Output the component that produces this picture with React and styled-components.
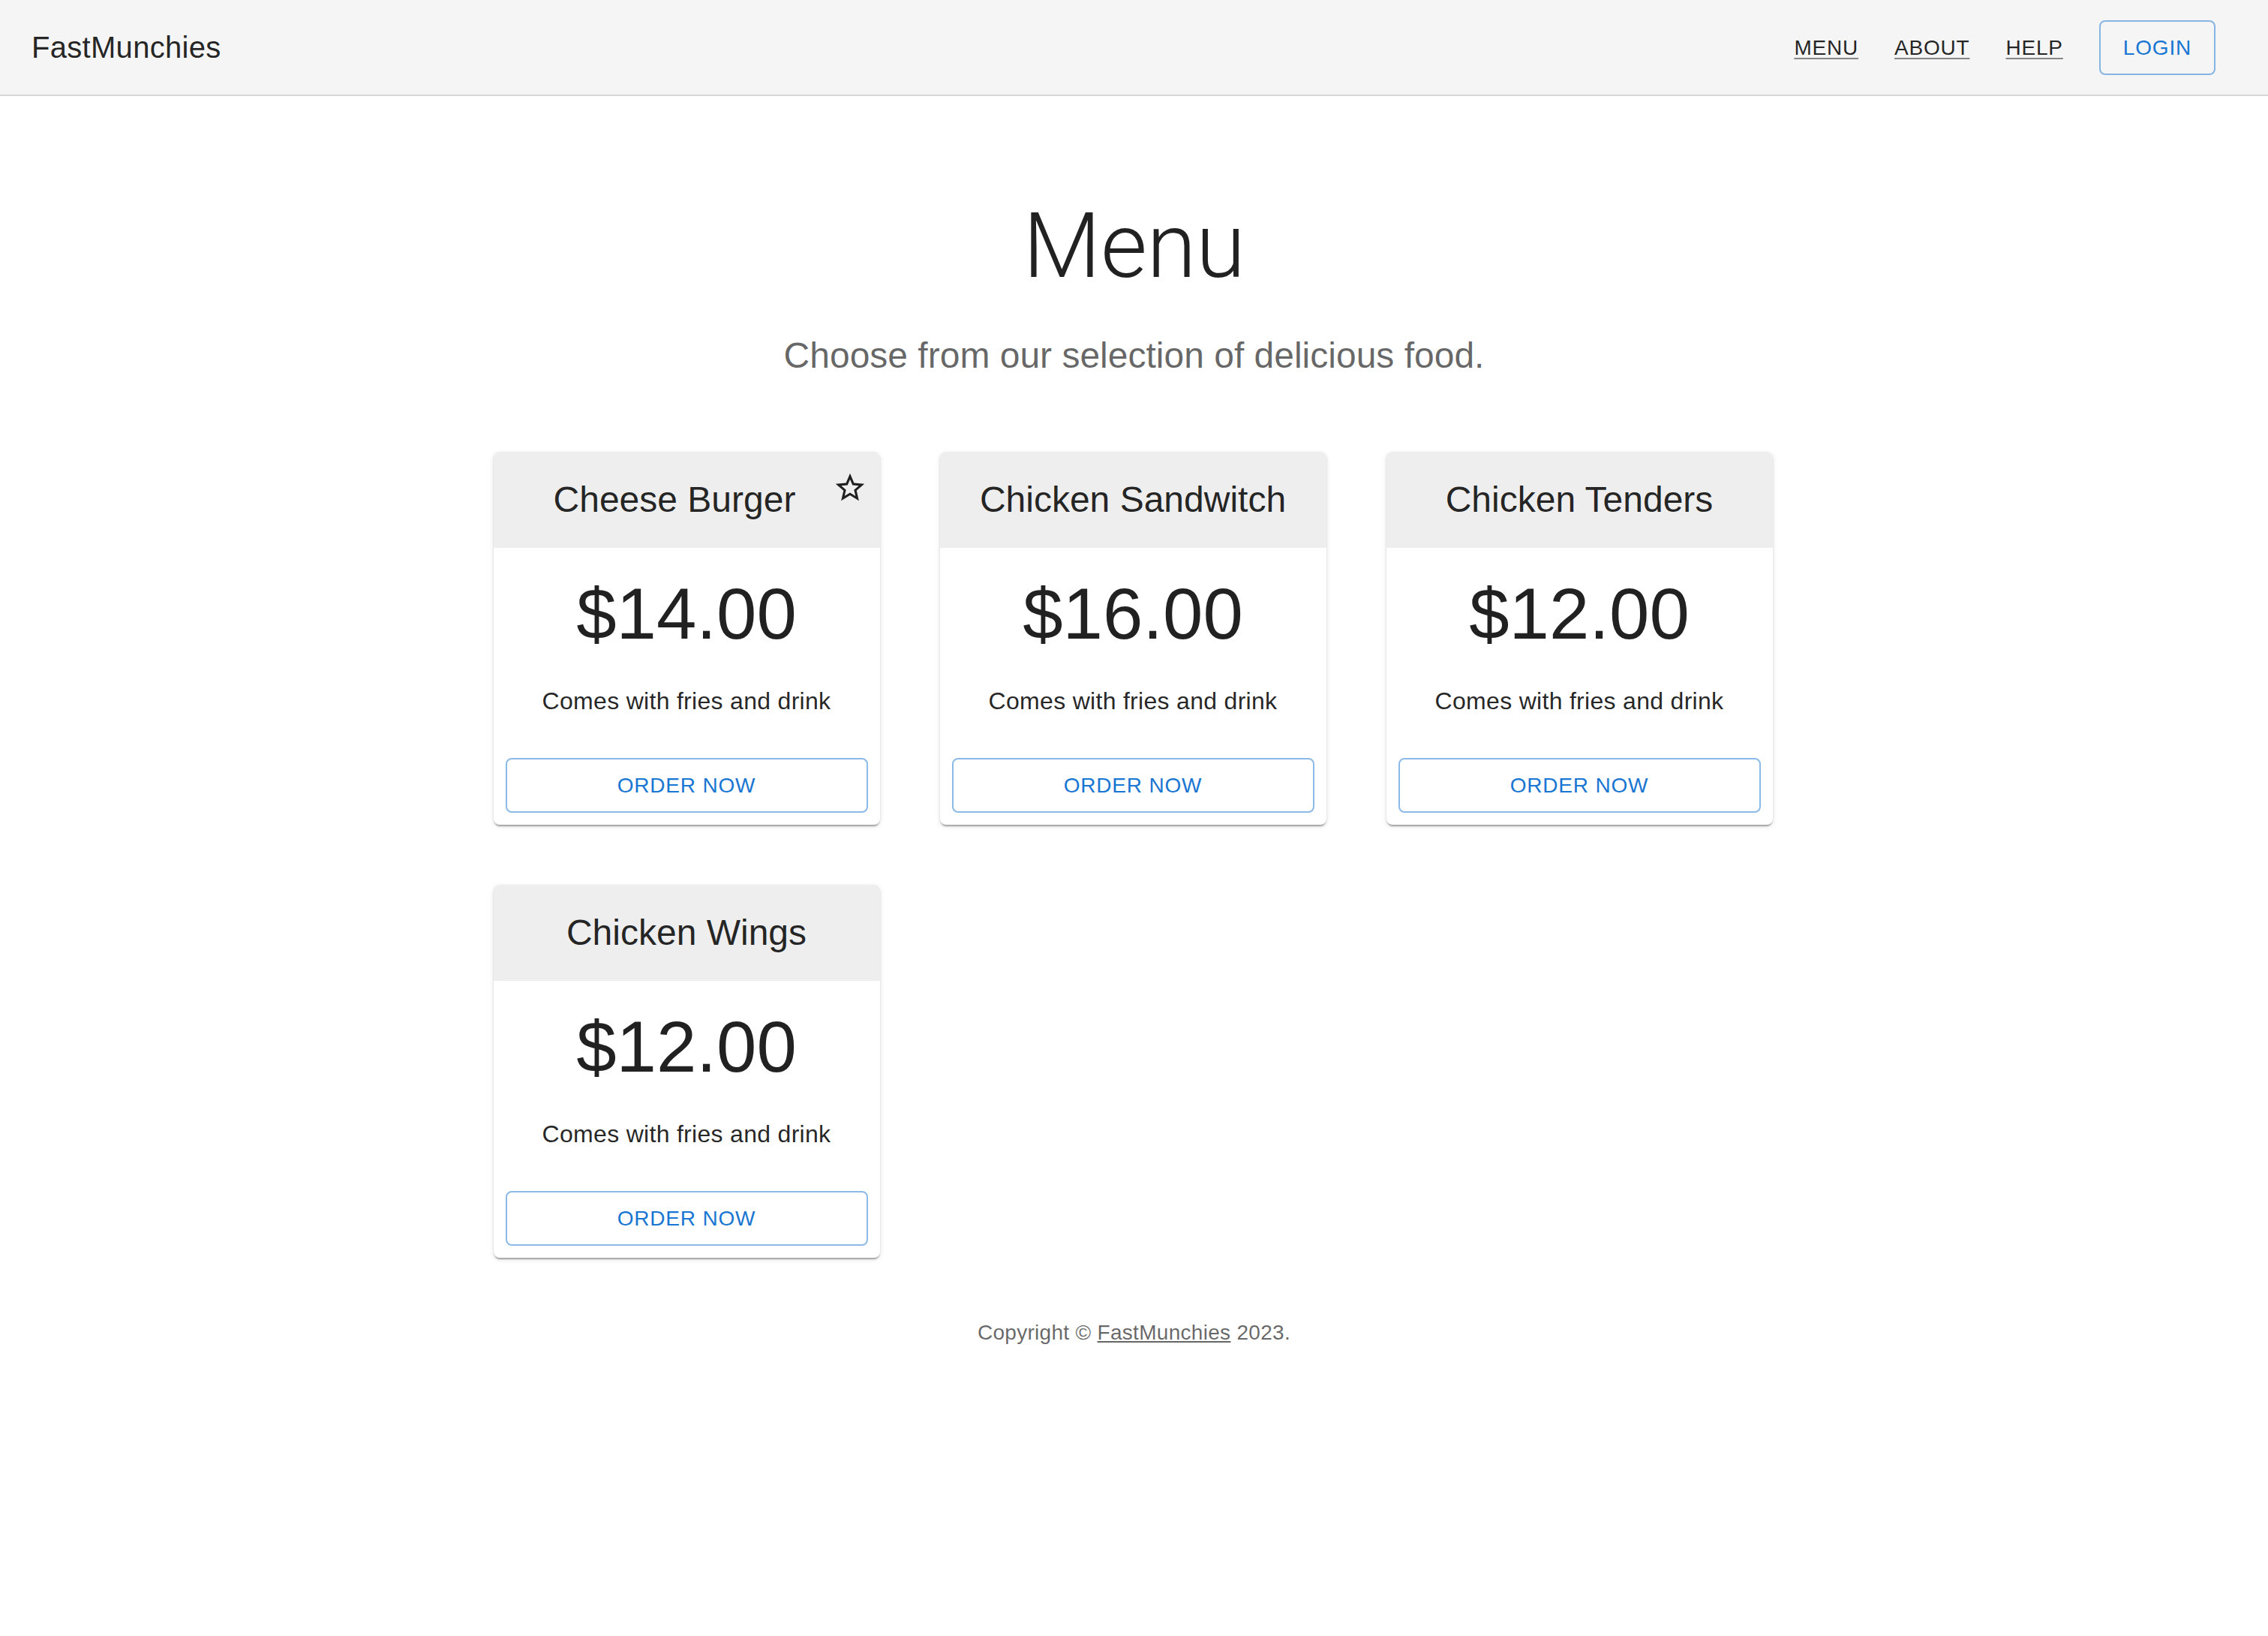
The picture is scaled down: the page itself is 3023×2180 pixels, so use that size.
import styled, { createGlobalStyle } from "styled-components";

const GlobalStyle = createGlobalStyle`
  body {
    margin: 0;
    background: #ffffff;
    font-family: "Liberation Sans", Arial, sans-serif;
    color: rgba(0, 0, 0, 0.87);
  }
  * {
    box-sizing: border-box;
  }
`;

const Header = styled.header`
  display: flex;
  align-items: center;
  height: 128px;
  padding: 0 46px 0 42px;
  background-color: #f5f5f5;
  border-bottom: 2px solid rgba(0, 0, 0, 0.12);
`;
const Brand = styled.div`
  flex: 1;
  font-size: 40px;
  line-height: 1.6;
  letter-spacing: 0.3px;
  white-space: nowrap;
`;
const NavLink = styled.a`
  margin: 0 24px;
  font-size: 28px;
  line-height: 1.75;
  letter-spacing: 0.8px;
  text-transform: uppercase;
  color: rgba(0, 0, 0, 0.87);
  text-decoration: underline;
  text-decoration-color: rgba(0, 0, 0, 0.45);
  text-decoration-thickness: 2px;
  text-underline-offset: 4px;
  cursor: pointer;
`;
const OutlinedButton = styled.button`
  display: block;
  width: ${(p) => (p.$full ? "100%" : "auto")};
  margin: ${(p) => (p.$full ? "0" : "0 24px")};
  padding: 10px 30px;
  background: transparent;
  border: 2px solid rgba(25, 118, 210, 0.5);
  border-radius: 8px;
  font-family: "Liberation Sans", Arial, sans-serif;
  font-size: 28px;
  line-height: 1.75;
  letter-spacing: 0.8px;
  text-transform: uppercase;
  color: #1976d2;
  cursor: pointer;
`;

const Hero = styled.section`
  max-width: 1200px;
  margin: 0 auto;
  padding: 128px 48px 96px;
  text-align: center;
`;
const Title = styled.h1`
  margin: 0 0 42px;
  font-family: Roboto, "Liberation Sans", sans-serif;
  font-weight: 300;
  font-size: 120px;
  line-height: 1.2;
  letter-spacing: -0.5px;
`;
const Lead = styled.p`
  margin: 0;
  font-size: 48px;
  line-height: 1.334;
  color: rgba(0, 0, 0, 0.6);
`;

const Grid = styled.main`
  display: grid;
  grid-template-columns: repeat(3, 515px);
  justify-content: center;
  gap: 80px;
  align-items: end;
  padding-right: 3px;
`;
const Card = styled.div`
  background: #ffffff;
  border-radius: 8px;
  overflow: hidden;
  box-shadow: 0 4px 2px -2px rgba(0, 0, 0, 0.2), 0 2px 2px 0 rgba(0, 0, 0, 0.14),
    0 2px 6px 0 rgba(0, 0, 0, 0.12);
`;
const CardHead = styled.div`
  display: flex;
  align-items: center;
  padding: 32px;
  background-color: #eeeeee;
`;
const CardTitle = styled.h2`
  flex: 1;
  margin: 0;
  font-size: 48px;
  font-weight: 400;
  line-height: 1.334;
  text-align: center;
`;
const Action = styled.div`
  flex: 0 0 auto;
  align-self: flex-start;
  margin: -8px -16px -8px 0;
  width: 48px;
  height: 48px;
  display: flex;
  align-items: center;
  justify-content: center;
`;
const CardBody = styled.div`
  padding: 32px 32px 48px;
  text-align: center;
`;
const Price = styled.div`
  margin-bottom: 32px;
  font-size: 96px;
  line-height: 1.167;
`;
const Feature = styled.div`
  font-size: 32px;
  line-height: 1.75;
  letter-spacing: 0.3px;
`;
const CardActions = styled.div`
  padding: 0 16px 16px;
`;

const Footer = styled.footer`
  margin-top: 80px;
  text-align: center;
  font-size: 28px;
  line-height: 1.43;
  letter-spacing: 0.3px;
  color: rgba(0, 0, 0, 0.6);

  a {
    color: inherit;
    text-decoration: underline;
  }
`;

function StarBorder() {
  return (
    <svg width="46" height="46" viewBox="0 0 24 24" fill="rgba(0,0,0,0.87)">
      <path d="M22 9.24l-7.19-.62L12 2 9.19 8.63 2 9.24l5.46 4.73L5.82 21 12 17.27 18.18 21l-1.63-7.03L22 9.24zM12 15.4l-3.76 2.27 1-4.28-3.32-2.88 4.38-.38L12 6.1l1.71 4.04 4.38.38-3.32 2.88 1 4.28L12 15.4z" />
    </svg>
  );
}

const items = [
  { title: "Cheese Burger", price: "$14.00", starred: true },
  { title: "Chicken Sandwitch", price: "$16.00" },
  { title: "Chicken Tenders", price: "$12.00" },
  { title: "Chicken Wings", price: "$12.00" },
];

export default function App() {
  return (
    <>
      <GlobalStyle />
      <Header>
        <Brand>FastMunchies</Brand>
        <nav>
          <NavLink>Menu</NavLink>
          <NavLink>About</NavLink>
          <NavLink>Help</NavLink>
        </nav>
        <OutlinedButton>Login</OutlinedButton>
      </Header>
      <Hero>
        <Title>Menu</Title>
        <Lead>Choose from our selection of delicious food.</Lead>
      </Hero>
      <Grid>
        {items.map((item) => (
          <Card key={item.title}>
            <CardHead>
              <CardTitle>{item.title}</CardTitle>
              {item.starred && (
                <Action>
                  <StarBorder />
                </Action>
              )}
            </CardHead>
            <CardBody>
              <Price>{item.price}</Price>
              <Feature>Comes with fries and drink</Feature>
            </CardBody>
            <CardActions>
              <OutlinedButton $full>Order now</OutlinedButton>
            </CardActions>
          </Card>
        ))}
      </Grid>
      <Footer>
        Copyright © <a>FastMunchies</a> 2023.
      </Footer>
    </>
  );
}
